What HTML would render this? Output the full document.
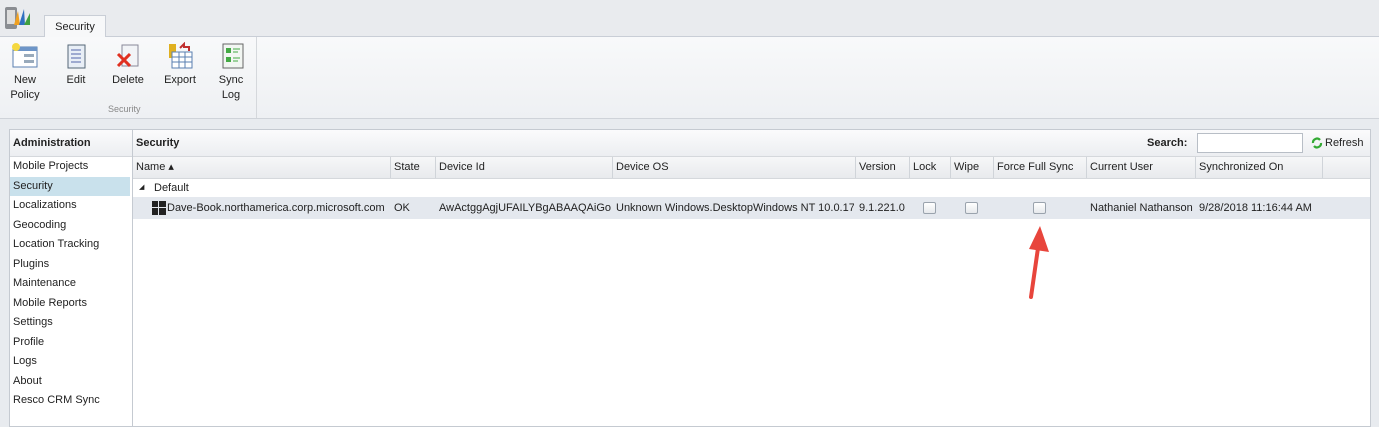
<!DOCTYPE html>
<html><head><style>
*{box-sizing:border-box;margin:0;padding:0}
body{width:1379px;height:427px;background:#e8ebef;font-family:"Liberation Sans",sans-serif;font-size:11px;color:#222;position:relative;overflow:hidden}
.abs{position:absolute}
.top{left:0;top:0;width:1379px;height:37px;background:#e9ebee;border-bottom:1px solid #c9ced6}
.tab{left:44px;top:15px;width:62px;height:23px;background:#f7f8f9;border:1px solid #c9ced6;border-bottom:none;text-align:center;line-height:22px}
.ribbon{left:0;top:37px;width:1379px;height:82px;background:linear-gradient(#f8f9fa,#eef0f3);border-bottom:1px solid #cfd3d9}
.btn{position:absolute;top:5px;text-align:center;line-height:15px}
.btn svg{display:block;margin:0 auto 3px}
.left{left:9px;top:129px;width:123px;height:298px;background:#fff;border:1px solid #c5cad1;border-right:none}
.left .h{height:27px;line-height:26px;padding-left:3px;font-weight:bold;background:linear-gradient(#fbfbfc,#eceef1);border-bottom:1px solid #d5d8dc}
.left div.i{height:19.5px;line-height:19px;padding-left:3px}
.left .sel{background:#c9e1ec;margin-right:2px}
.main{left:132px;top:129px;width:1239px;height:298px;background:#fff;border:1px solid #c5cad1}
.mh{height:27px;background:linear-gradient(#fbfbfc,#eceef1);border-bottom:1px solid #d5d8dc;font-weight:bold;line-height:26px;padding-left:3px;position:relative}
.ch{height:22px;background:linear-gradient(#f6f7f8,#e8eaed);border-bottom:1px solid #d5d8dc;position:relative}
.ch span{position:absolute;top:0;height:21px;line-height:21px;padding-left:3px;border-right:1px solid #d0d4d9}
.row{position:absolute;left:0;width:1237px;line-height:18px}
.cb{position:absolute;top:5px;width:13px;height:12px;border:1px solid #9aa3ad;border-radius:2px;background:linear-gradient(#fff,#e6e9ec)}
</style></head><body>
<div class="abs top"></div>
<svg class="abs" style="left:4px;top:3px" width="28" height="30"><rect x="1" y="4" width="12" height="22" rx="2" fill="#8a8d92"/><rect x="3" y="7" width="8" height="14" fill="#ddd"/><polygon points="10,22 14,8 16,22" fill="#f0a020"/><polygon points="15,22 20,6 21,22" fill="#3070c0"/><polygon points="20,22 26,10 26,22" fill="#40a040"/></svg>
<div class="abs tab">Security</div>
<div class="abs ribbon">
 <div class="btn" style="left:6px;width:38px"><svg width="28" height="28"><rect x="2" y="5" width="24" height="20" fill="#fff" stroke="#5a7fb0"/><rect x="2" y="5" width="24" height="4" fill="#6d95c8"/><rect x="13" y="12" width="10" height="3" fill="#9ab"/><rect x="13" y="18" width="10" height="3" fill="#9ab"/><circle cx="5" cy="5" r="4" fill="#f5d840"/></svg>New<br>Policy</div>
 <div class="btn" style="left:60px;width:32px"><svg width="28" height="28"><rect x="6" y="3" width="17" height="23" fill="#e8eef6" stroke="#567"/><path d="M9 8h10M9 12h10M9 16h10M9 20h10" stroke="#56a"/></svg>Edit</div>
 <div class="btn" style="left:108px;width:40px"><svg width="28" height="28"><rect x="8" y="3" width="16" height="21" fill="#f2f4f7" stroke="#889"/><path d="M4 12l12 12M16 12L4 24" stroke="#e03020" stroke-width="3"/></svg>Delete</div>
 <div class="btn" style="left:159px;width:42px"><svg width="28" height="28"><rect x="3" y="2" width="7" height="14" fill="#e0b020"/><rect x="6" y="10" width="20" height="16" fill="#fff" stroke="#5a7fb0"/><path d="M6 15h20M6 20h20M13 10v16M19 10v16" stroke="#5a7fb0"/><path d="M14 6l4-4v3h5v4" stroke="#c03030" stroke-width="2" fill="none"/></svg>Export</div>
 <div class="btn" style="left:212px;width:38px"><svg width="28" height="28"><rect x="6" y="2" width="20" height="24" fill="#f2f6f2" stroke="#666"/><rect x="9" y="6" width="5" height="5" fill="#4a4"/><rect x="9" y="15" width="5" height="5" fill="#4a4"/><path d="M16 7h7M16 10h5M16 16h7M16 19h5" stroke="#4a4"/></svg>Sync<br>Log</div>
 <div class="abs" style="left:108px;top:67px;color:#888;font-size:9px">Security</div>
 <div class="abs" style="left:256px;top:0;width:1px;height:81px;background:#d5d8dc"></div>
</div>
<div class="abs left"><div class="h">Administration</div>
<div class="i">Mobile Projects</div><div class="i sel">Security</div><div class="i">Localizations</div><div class="i">Geocoding</div><div class="i">Location Tracking</div><div class="i">Plugins</div><div class="i">Maintenance</div><div class="i">Mobile Reports</div><div class="i">Settings</div><div class="i">Profile</div><div class="i">Logs</div><div class="i">About</div><div class="i">Resco CRM Sync</div></div>
<div class="abs main">
 <div class="mh">Security
  <span class="abs" style="left:1014px;top:0">Search:</span>
  <div class="abs" style="left:1064px;top:3px;width:106px;height:20px;background:#fff;border:1px solid #b8bec6"></div>
  <svg class="abs" style="left:1178px;top:7px" width="12" height="12"><path d="M2 6a4 4 0 0 1 7-3M10 6a4 4 0 0 1-7 3" stroke="#3a3" stroke-width="2.2" fill="none"/></svg>
  <span class="abs" style="left:1192px;top:0;font-weight:normal">Refresh</span>
 </div>
 <div class="ch">
  <span style="left:0;width:258px">Name &#9652;</span><span style="left:258px;width:45px">State</span><span style="left:303px;width:177px">Device Id</span><span style="left:480px;width:243px">Device OS</span><span style="left:723px;width:54px">Version</span><span style="left:777px;width:41px">Lock</span><span style="left:818px;width:43px">Wipe</span><span style="left:861px;width:93px">Force Full Sync</span><span style="left:954px;width:109px">Current User</span><span style="left:1063px;width:127px">Synchronized On</span>
 </div>
 <div class="row" style="top:49px;height:18px"><span style="position:absolute;left:6px;font-size:7px">&#9698;</span><span style="position:absolute;left:21px">Default</span></div>
 <div class="row" style="top:67px;height:22px;background:#e4e8ee;line-height:22px">
  <svg class="abs" style="left:19px;top:4px" width="14" height="14"><rect x="0" y="0" width="6" height="6" fill="#222"/><rect x="7" y="0" width="7" height="6" fill="#222"/><rect x="0" y="7" width="6" height="7" fill="#222"/><rect x="7" y="7" width="7" height="7" fill="#222"/></svg>
  <span class="abs" style="left:34px">Dave-Book.northamerica.corp.microsoft.com</span>
  <span class="abs" style="left:261px">OK</span>
  <span class="abs" style="left:306px;width:172px;overflow:hidden;white-space:nowrap">AwActggAgjUFAILYBgABAAQAiGoEAAAA</span>
  <span class="abs" style="left:483px;width:238px;overflow:hidden;white-space:nowrap">Unknown Windows.DesktopWindows NT 10.0.17134</span>
  <span class="abs" style="left:726px">9.1.221.0</span>
  <div class="cb" style="left:790px"></div><div class="cb" style="left:832px"></div><div class="cb" style="left:900px"></div>
  <span class="abs" style="left:957px">Nathaniel Nathanson</span>
  <span class="abs" style="left:1066px">9/28/2018 11:16:44 AM</span>
 </div>
</div>
<svg class="abs" style="left:1020px;top:220px" width="30" height="82"><path d="M11 77L18 28" stroke="#e8453c" stroke-width="4" stroke-linecap="round"/><polygon points="20,6 29,32 9,29" fill="#e8453c"/></svg>
</body></html>
